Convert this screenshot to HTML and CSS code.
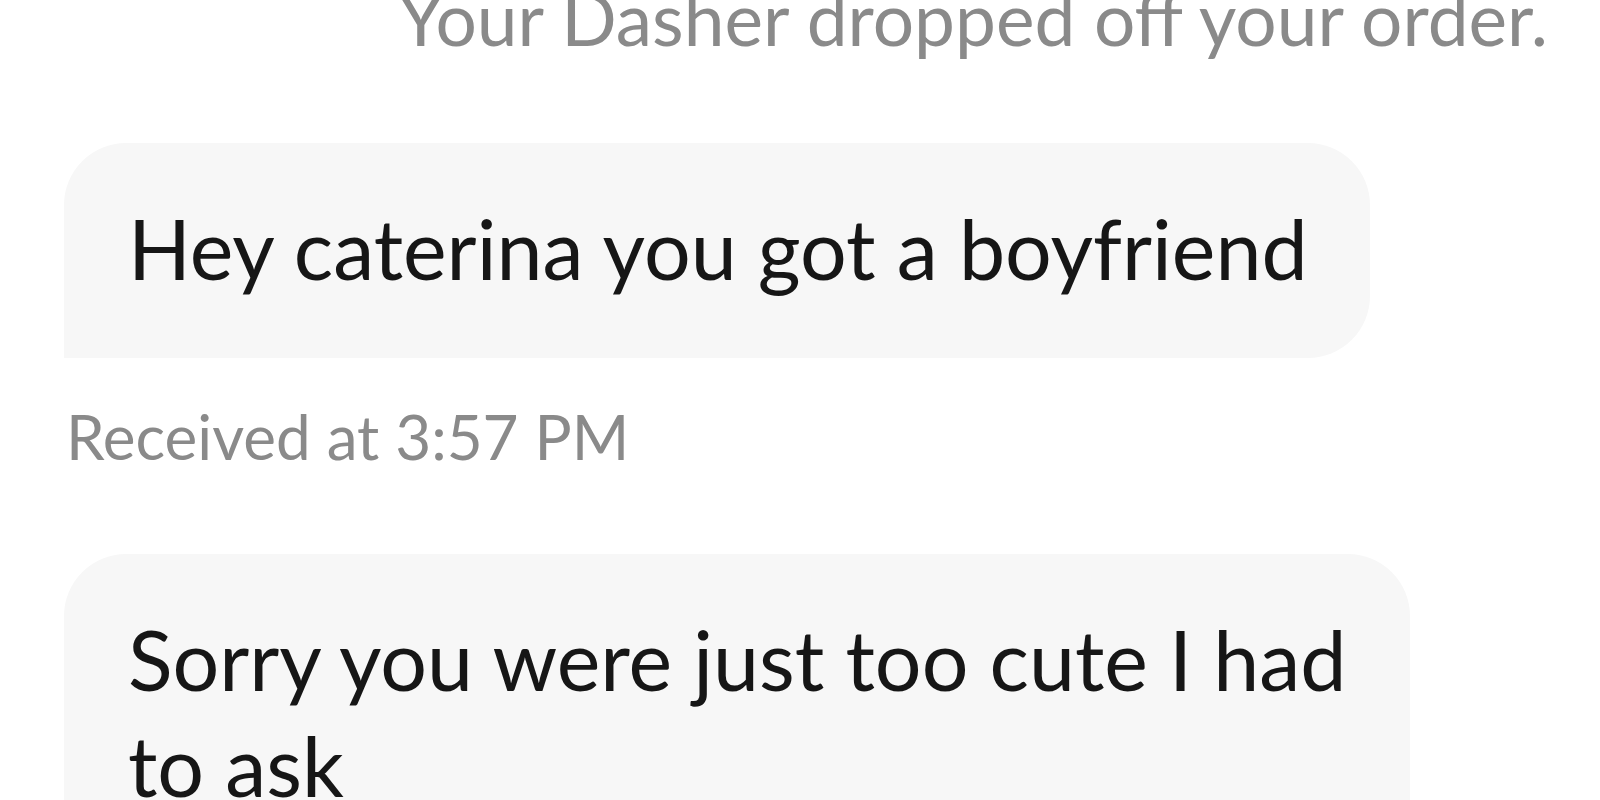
FILE: index.html
```html
<!DOCTYPE html>
<html lang="en">
<head>
<meta charset="utf-8">
<title>Messages</title>
<link rel="stylesheet" href="styles.css">
</head>
<body>
<main class="chat">
  <p class="status">Your Dasher dropped off your order.</p>
  <div class="bubble bubble-first">Hey caterina you got a boyfriend</div>
  <p class="meta">Received at 3:57 PM</p>
  <div class="bubble bubble-wide">Sorry you were just too cute I had to ask</div>
</main>
</body>
</html>
```
FILE: styles.css
```css
html, body {
  margin: 0;
  padding: 0;
  background: #ffffff;
  overflow: hidden;
}

body {
  width: 1600px;
  height: 800px;
  font-family: "Lato", "Noto Sans", sans-serif;
}

.chat {
  display: flex;
  flex-direction: column;
  align-items: flex-start;
  padding: 0 52px 0 64px;
}

.status {
  align-self: stretch;
  margin: -25px 0 0 0;
  font-size: 73px;
  line-height: 86px;
  color: #8a8a8a;
  text-align: right;
}

.bubble {
  box-sizing: border-box;
  background: #f7f7f7;
  color: #161616;
  font-size: 82.5px;
  line-height: 106px;
  padding: 53px 62px 56px 64px;
  border-radius: 62px 62px 62px 0;
}

.bubble-first {
  margin-top: 82px;
}

.bubble-wide {
  width: 1346px;
  margin-top: 82px;
}

.meta {
  margin: 42px 0 0 2px;
  font-size: 62px;
  line-height: 72px;
  color: #8a8a8a;
}
```
